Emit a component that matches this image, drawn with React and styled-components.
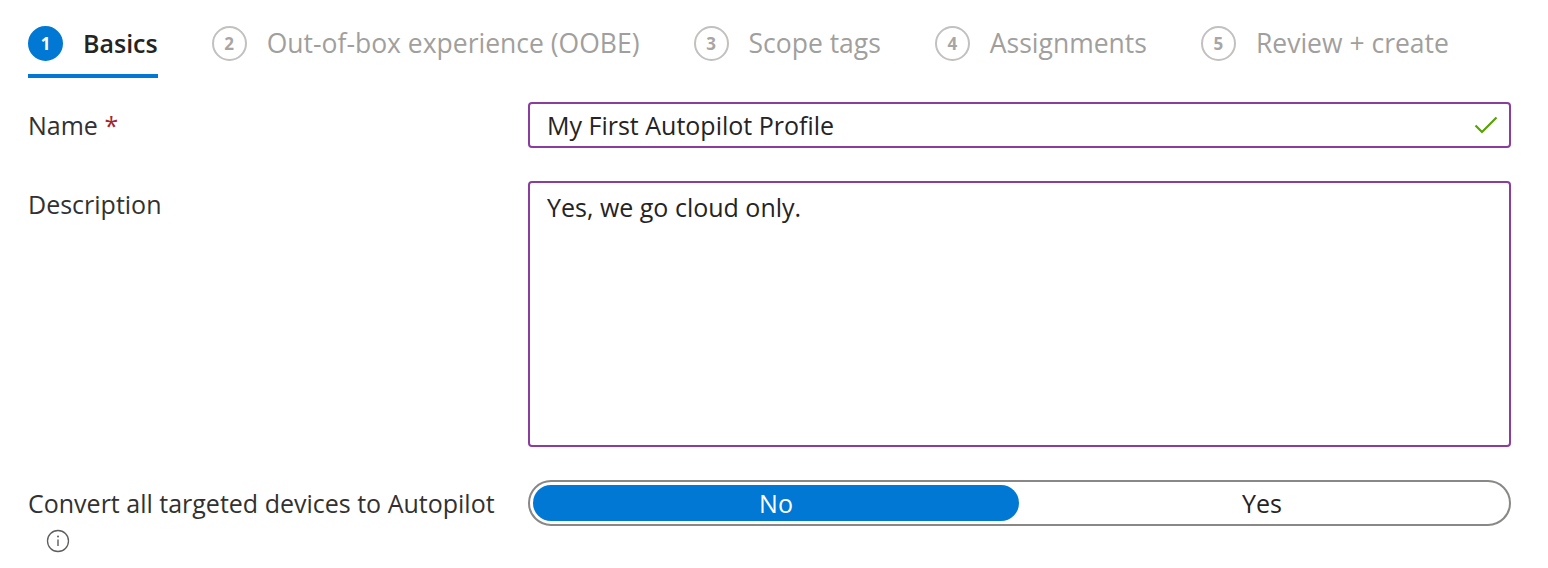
import React from "react";
import styled, { createGlobalStyle } from "styled-components";

const steps = [
  "Basics",
  "Out-of-box experience (OOBE)",
  "Scope tags",
  "Assignments",
  "Review + create",
];

const GlobalStyle = createGlobalStyle`
  body {
    margin: 0;
    background: #fff;
    font-family: "Open Sans", "Liberation Sans", sans-serif;
    color: #323130;
  }
`;

const Check = () => (
  <svg width="24" height="18" viewBox="0 0 24 18">
    <path d="M1.5 9.5 L8 16 L22.5 1.5" fill="none" stroke="#57a300" strokeWidth="2.2" />
  </svg>
);

const Info = () => (
  <svg width="24" height="24" viewBox="0 0 24 24">
    <circle cx="12" cy="12" r="10.5" fill="none" stroke="#605e5c" strokeWidth="1.3" />
    <circle cx="12" cy="7.6" r="1" fill="#605e5c" />
    <path d="M12 10.5 V17" stroke="#605e5c" strokeWidth="1.4" />
  </svg>
);

export default function App() {
  return (
    <>
      <GlobalStyle />
      <Page>
        <Tabs>
          {steps.map((s, i) => (
            <Tab key={s} active={i === 0}>
              <StepNum active={i === 0}>{i + 1}</StepNum>
              <StepLabel active={i === 0}>{s}</StepLabel>
            </Tab>
          ))}
        </Tabs>

        <Form>
          <Label>
            <LabelText>
              Name <Req>*</Req>
            </LabelText>
          </Label>
          <InputBox>
            <InputText>My First Autopilot Profile</InputText>
            <Check />
          </InputBox>

          <Label>
            <LabelText>Description</LabelText>
          </Label>
          <TextArea>Yes, we go cloud only.</TextArea>

          <Label>
            <LabelText>Convert all targeted devices to Autopilot</LabelText>
            <InfoWrap>
              <Info />
            </InfoWrap>
          </Label>
          <Segmented>
            <Option selected>No</Option>
            <Option>Yes</Option>
          </Segmented>
        </Form>
      </Page>
    </>
  );
}

const Page = styled.div`
  padding: 26px 37px 0 28px;
`;

const Tabs = styled.div`
  display: flex;
  align-items: flex-start;
  gap: 54px;
`;

const Tab = styled.div`
  display: flex;
  align-items: center;
  gap: 20px;
  padding-bottom: 13px;
  border-bottom: 4px solid ${(p) => (p.active ? "#0078d4" : "transparent")};
`;

const StepNum = styled.div`
  width: 35px;
  height: 35px;
  box-sizing: border-box;
  border-radius: 50%;
  display: flex;
  align-items: center;
  justify-content: center;
  font-size: 17px;
  font-weight: 700;
  background: ${(p) => (p.active ? "#0078d4" : "#fff")};
  color: ${(p) => (p.active ? "#fff" : "#a8a6a4")};
  border: 2px solid ${(p) => (p.active ? "#0078d4" : "#c3c1bf")};
`;

const StepLabel = styled.span`
  font-size: ${(p) => (p.active ? "25px" : "26.5px")};
  line-height: 35px;
  font-weight: ${(p) => (p.active ? 600 : 400)};
  color: ${(p) => (p.active ? "#252423" : "#a19f9d")};
`;

const Form = styled.div`
  display: grid;
  grid-template-columns: 500px 1fr;
  row-gap: 33px;
  margin-top: 24px;
`;

const Label = styled.div`
  display: flex;
  flex-direction: column;
  align-items: flex-start;
`;

const LabelText = styled.div`
  font-size: 25px;
  line-height: 46px;
  color: #323130;
`;

const Req = styled.span`
  color: #a4262c;
`;

const InfoWrap = styled.div`
  margin: 3px 0 0 18px;
  display: flex;
`;

const InputBox = styled.div`
  height: 46px;
  box-sizing: border-box;
  border: 2px solid #8a3d9e;
  border-radius: 4px;
  display: flex;
  align-items: center;
  justify-content: space-between;
  padding: 0 11px 0 17px;
`;

const InputText = styled.span`
  font-size: 25px;
  color: #252423;
`;

const TextArea = styled.div`
  height: 266px;
  box-sizing: border-box;
  border: 2px solid #8a3d9e;
  border-radius: 4px;
  padding: 6px 17px;
  font-size: 25px;
  line-height: 36px;
  color: #252423;
`;

const Segmented = styled.div`
  height: 46px;
  box-sizing: border-box;
  border: 2px solid #8a8886;
  border-radius: 23px;
  padding: 3px 4px 3px 3px;
  display: grid;
  grid-template-columns: 1fr 1fr;
`;

const Option = styled.div`
  border-radius: 18px;
  display: flex;
  align-items: center;
  justify-content: center;
  font-size: 25px;
  background: ${(p) => (p.selected ? "#0078d4" : "transparent")};
  color: ${(p) => (p.selected ? "#fff" : "#252423")};
`;
